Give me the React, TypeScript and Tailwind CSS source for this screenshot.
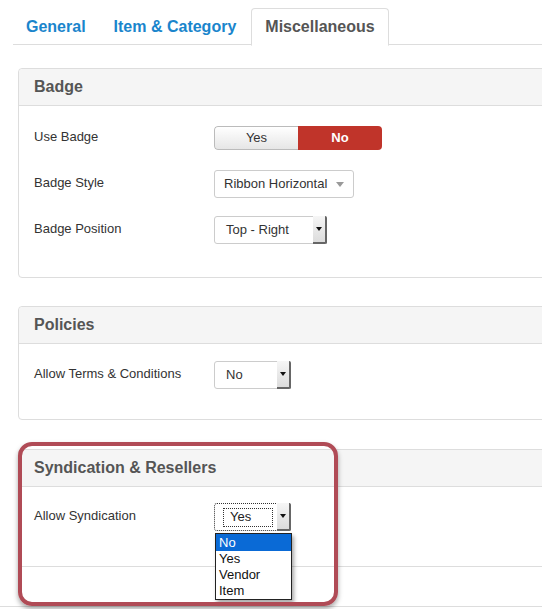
import React from "react";

const font = { fontFamily: '"Liberation Sans", Arial, sans-serif' };

function Tabs() {
  const tabs = ["General", "Item & Category", "Miscellaneous"];
  return (
    <ul className="flex ml-[13px] mt-[8px] border-b border-[#ddd] h-[37px]">
      {tabs.map((t) => {
        const active = t === "Miscellaneous";
        return (
          <li
            key={t}
            className={
              active
                ? "mr-[2px] -mb-px px-[13px] h-[38px] flex items-center text-[16px] font-bold text-[#555] bg-white border border-[#ddd] border-b-white rounded-t-[4px]"
                : "mr-[2px] px-[13px] h-[37px] flex items-center text-[16px] font-bold text-[#1a85cc]"
            }
          >
            {t}
          </li>
        );
      })}
    </ul>
  );
}

function Panel({ title, children, bodyClass }: { title: string; children: React.ReactNode; bodyClass: string }) {
  return (
    <div className="ml-[18px] w-[560px] border border-[#ddd] rounded-[4px] bg-white">
      <div className="h-[37px] bg-[#f5f5f5] border-b border-[#ddd] rounded-t-[4px] pl-[15px] flex items-center text-[16px] font-bold text-[#555]">
        {title}
      </div>
      <div className={bodyClass}>{children}</div>
    </div>
  );
}

function Row({ label, children, h = "h-[28px]" }: { label: string; children: React.ReactNode; h?: string }) {
  return (
    <div className={`flex items-center ${h}`}>
      <div className="w-[195px] pl-[15px] text-[13px] text-[#333] -mt-[3px]">{label}</div>
      {children}
    </div>
  );
}

function Select({ value, w, focused }: { value: string; w: string; focused?: boolean }) {
  return (
    <div
      className={`${w} h-[28px] flex items-stretch bg-white rounded-[3px] ${
        focused ? "border border-dotted border-[#333]" : "border border-[#ccc]"
      }`}
    >
      <div className="flex-1 flex items-center pl-[8px]">
        {focused ? (
          <span className="border border-dotted border-[#333] h-[19px] w-[50px] flex items-center pl-[6px] text-[13px] text-[#222]">
            {value}
          </span>
        ) : (
          <span className="pl-[3px] text-[13px] text-[#333]">{value}</span>
        )}
      </div>
      <div className="w-[14px] my-[-1px] mr-[-1px] bg-gradient-to-b from-[#f6f6f6] to-[#dcdcdc] border-r-2 border-b-2 border-[#666] rounded-r-[2px] flex items-center justify-center">
        <svg width="6" height="4" viewBox="0 0 6 4">
          <path d="M0 0h6L3 4z" fill="#111" />
        </svg>
      </div>
    </div>
  );
}

export default function App() {
  return (
    <div className="w-[542px] h-[609px] overflow-hidden bg-white relative" style={font}>
      <Tabs />
      <div className="mt-[23px]">
        <Panel title="Badge" bodyClass="pt-[18px] pb-[33px] flex flex-col gap-[18px]">
          <Row label="Use Badge">
            <div className="flex h-[24px] w-[168px] rounded-[4px] overflow-hidden text-[13px]">
              <div className="w-[84px] flex items-center justify-center bg-gradient-to-b from-white to-[#e6e6e6] border border-[#bbb] border-r-0 rounded-l-[4px] text-[#333]">
                Yes
              </div>
              <div className="flex-1 flex items-center justify-center bg-[#c0342a] text-white font-bold">No</div>
            </div>
          </Row>
          <Row label="Badge Style">
            <div className="w-[140px] h-[28px] border border-[#ccc] rounded-[3px] flex items-center justify-between pl-[9px] pr-[9px] text-[13px] text-[#333]">
              <span>Ribbon Horizontal</span>
              <svg width="8" height="5" viewBox="0 0 8 5">
                <path d="M0 0h8L4 5z" fill="#999" />
              </svg>
            </div>
          </Row>
          <Row label="Badge Position">
            <Select value="Top - Right" w="w-[113px]" />
          </Row>
        </Panel>
      </div>
      <div className="mt-[28px]">
        <Panel title="Policies" bodyClass="pt-[17px] pb-[30px]">
          <Row label="Allow Terms & Conditions">
            <Select value="No" w="w-[77px]" />
          </Row>
        </Panel>
      </div>
      <div className="mt-[29px]">
        <Panel title="Syndication & Resellers" bodyClass="pt-[16px] pb-[35px]">
          <Row label="Allow Syndication">
            <Select value="Yes" w="w-[77px]" focused />
          </Row>
        </Panel>
      </div>
      <div className="mt-[39px] border-t border-[#ddd]"></div>

      {/* open dropdown list */}
      <div className="absolute left-[215px] top-[533px] w-[77px] bg-white border border-[#222] shadow-[2px_3px_4px_rgba(0,0,0,0.35)] text-[13px] leading-[16px] text-[#111]">
        <div className="bg-[#0a6ad6] text-white pl-[3px] h-[17px] flex items-center">No</div>
        <div className="pl-[3px]">Yes</div>
        <div className="pl-[3px]">Vendor</div>
        <div className="pl-[3px]">Item</div>
      </div>

      {/* red highlight */}
      <div className="absolute left-[18px] top-[442px] w-[320px] h-[164px] border-[4px] border-[#b04b56] rounded-[14px] shadow-[0_3px_5px_rgba(0,0,0,0.35)] pointer-events-none"></div>
    </div>
  );
}
